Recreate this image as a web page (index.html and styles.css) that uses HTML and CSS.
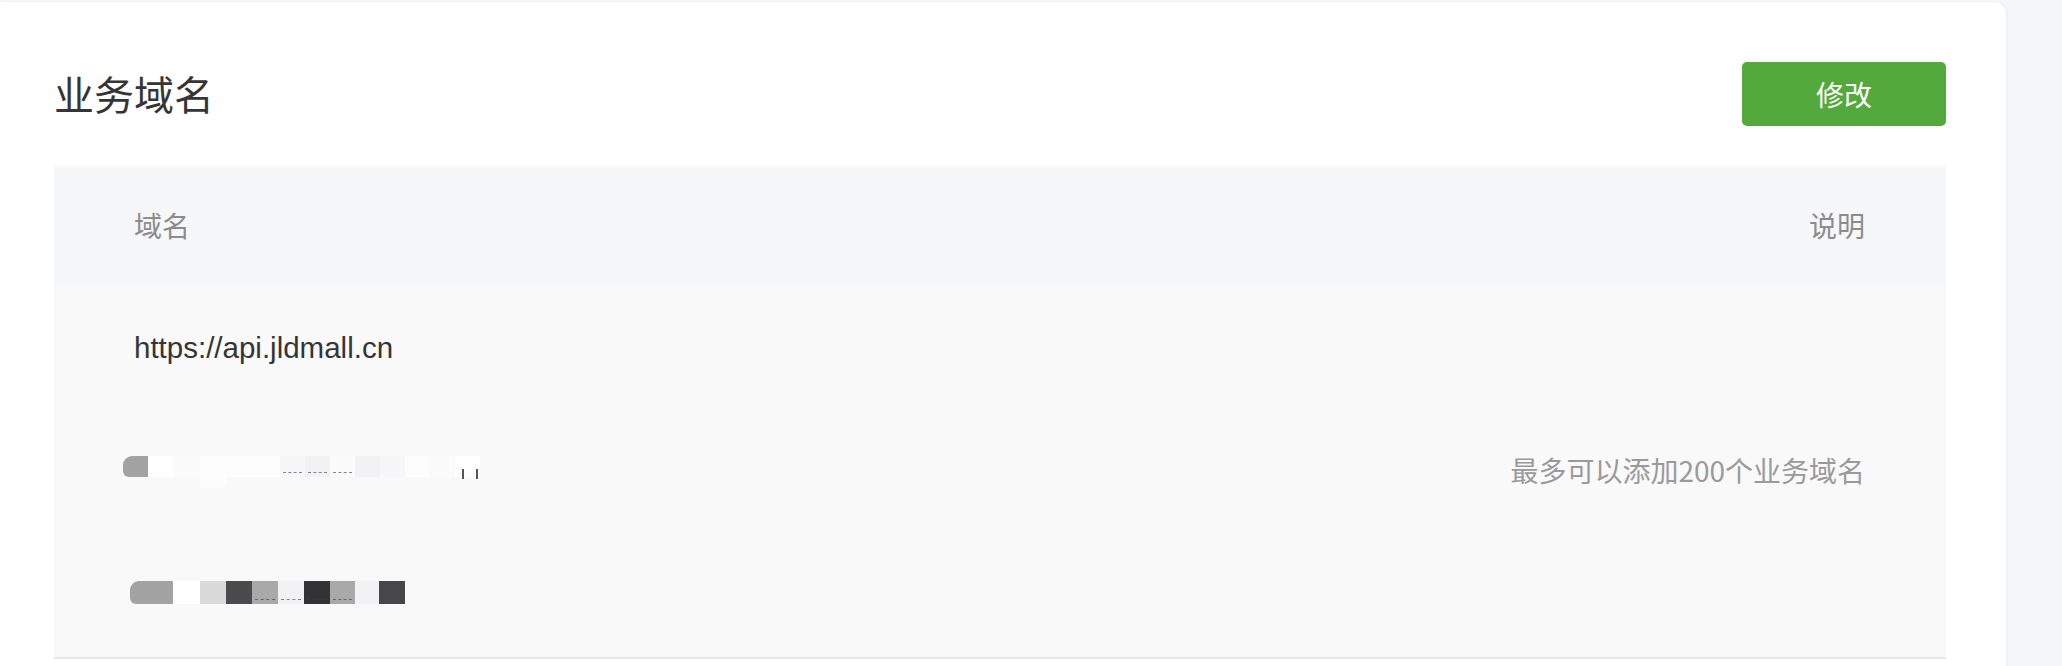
FILE: index.html
```html
<!DOCTYPE html>
<html lang="zh-CN">
<head>
<meta charset="utf-8">
<title>业务域名</title>
<link rel="stylesheet" href="styles.css">
</head>
<body>
<div class="page">
  <section class="card">
    <header class="card-head">
      <h2 class="title">业务域名</h2>
      <button class="btn-primary" type="button">修改</button>
    </header>
    <table class="domain-table">
      <thead>
        <tr>
          <th class="col-domain"><span class="th-text">域名</span></th>
          <th class="col-desc"><span class="th-text">说明</span></th>
        </tr>
      </thead>
      <tbody>
        <tr>
          <td class="col-domain"><span class="url">https://api.jldmall.cn</span></td>
          <td class="col-desc" rowspan="3"><span class="desc">最多可以添加200个业务域名</span></td>
        </tr>
        <tr>
          <td class="col-domain">
            <span class="smudge smudge-a">
              <i class="b w25 c-g1 round-l"></i><i class="b w25 c-w0"></i><i class="b w27 c-w1"></i><i class="b w80 c-w2 tail"></i><i class="b w25 c-w3 dash"></i><i class="b w25 c-w4 dash"></i><i class="b w25 c-w1 dash"></i><i class="b w25 c-w4"></i><i class="b w25 c-w3"></i><i class="b w25 c-w2"></i><i class="b w25 c-w1"></i><i class="b w25 c-w0 frag"></i>
            </span>
          </td>
        </tr>
        <tr>
          <td class="col-domain">
            <span class="smudge smudge-b">
              <i class="b w43 c-g1 round-l"></i><i class="b w27 c-w0"></i><i class="b w26 c-l1"></i><i class="b w26 c-d1"></i><i class="b w26 c-g2 dash"></i><i class="b w26 c-w4 dash"></i><i class="b w26 c-d2 dash"></i><i class="b w25 c-g2 dash"></i><i class="b w24 c-w4"></i><i class="b w26 c-d3"></i>
            </span>
          </td>
        </tr>
      </tbody>
    </table>
  </section>
</div>
</body>
</html>
```

FILE: styles.css
```css
* { box-sizing: border-box; }

html, body {
  margin: 0;
  padding: 0;
}

body {
  width: 2062px;
  height: 666px;
  overflow: hidden;
  background: #f5f6f8;
  font-family: "Noto Sans CJK SC", "Liberation Sans", sans-serif;
  color: #353535;
}

.page {
  padding: 2px 56px 0 0;
  height: 666px;
}

.card {
  background: #ffffff;
  border-radius: 0 12px 0 0;
  box-shadow: 1px 0 2px rgba(0, 0, 0, 0.05);
  padding: 0 60px 0 54px;
  height: 664px;
}

.card-head {
  display: flex;
  align-items: center;
  justify-content: space-between;
  padding: 60px 0 40px;
}

.title {
  margin: 0;
  font-size: 40px;
  font-weight: 400;
  line-height: 56px;
  color: #353535;
  position: relative;
  top: -1px;
}

.btn-primary {
  width: 204px;
  height: 64px;
  border: 0;
  border-radius: 5px;
  background: #53a93b;
  color: #ffffff;
  font-family: "Noto Sans CJK SC", sans-serif;
  font-size: 28px;
  line-height: 64px;
  padding: 0;
}

.domain-table {
  width: 100%;
  border-collapse: collapse;
  border-spacing: 0;
  border-bottom: 2px solid #e6e6eb;
}

.domain-table th {
  height: 121px;
  background: #f6f7f9;
  font-weight: 400;
  font-size: 28px;
  color: #8c8c8c;
  padding: 0;
  vertical-align: middle;
}

.th-text {
  position: relative;
  top: -2px;
}

.domain-table td {
  height: 123.7px;
  background: #f9f9fa;
  padding: 0;
  vertical-align: middle;
}

.col-domain {
  text-align: left;
  padding-left: 80px !important;
}

.col-desc {
  text-align: right;
  padding-right: 81px !important;
}

.url {
  font-family: "Liberation Sans", sans-serif;
  font-size: 29.5px;
  color: #353535;
  position: relative;
  top: -1px;
}

.desc {
  font-size: 28px;
  color: #9a9a9a;
  position: relative;
  top: -2px;
}

/* redacted (blurred) domain values */
.smudge {
  display: flex;
  align-items: stretch;
  height: 22px;
  position: relative;
}

.smudge-a {
  margin-left: -11px;
  top: -6px;
  height: 21px;
}

.smudge-b {
  margin-left: -4px;
  top: -3px;
  height: 23px;
}

.b {
  display: block;
  height: 100%;
  position: relative;
}

.w24 { width: 24px; }
.w25 { width: 25px; }
.w26 { width: 26px; }
.w27 { width: 27px; }
.w43 { width: 43px; }
.w80 { width: 80px; }

.c-g1 { background: #a3a3a3; }
.c-g2 { background: #a9a9a9; }
.c-w0 { background: #ffffff; }
.c-w1 { background: #fbfbfc; }
.c-w2 { background: #fdfdfe; }
.c-w3 { background: #f7f7f9; }
.c-w4 { background: #f2f2f4; }
.c-l1 { background: #dadadb; }
.c-d1 { background: #4b4b4d; }
.c-d2 { background: #333335; }
.c-d3 { background: #474749; }

.round-l { border-radius: 9px 0 0 6px; }

.tail::after {
  content: "";
  position: absolute;
  left: 0;
  top: 100%;
  width: 27px;
  height: 10px;
  background: #fdfdfe;
}

.dash::after {
  content: "";
  position: absolute;
  left: 3px;
  right: 3px;
  bottom: 4px;
  border-bottom: 1px dashed rgba(60, 60, 60, 0.6);
}

.frag::after {
  content: "";
  position: absolute;
  right: 2px;
  bottom: -2px;
  width: 12px;
  height: 10px;
  border-left: 2px solid #555;
  border-right: 2px solid #555;
}
```
